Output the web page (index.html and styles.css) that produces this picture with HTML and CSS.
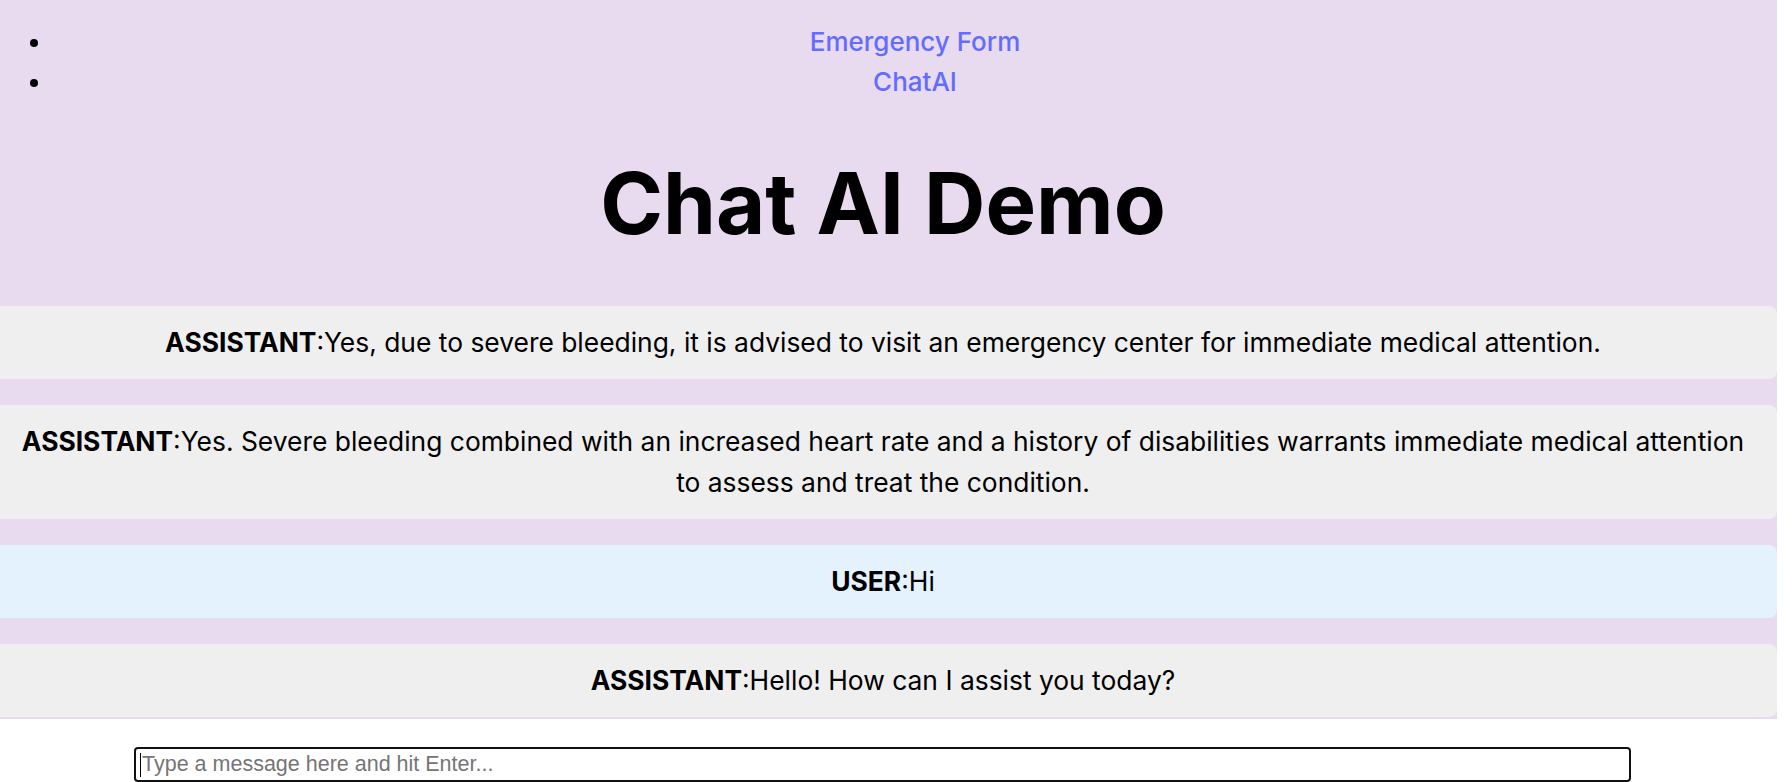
FILE: index.html
```html
<!DOCTYPE html>
<html lang="en">
<head>
<meta charset="utf-8">
<title>Chat AI Demo</title>
<link rel="stylesheet" href="styles.css">
</head>
<body>
<div class="page">
  <div class="app">
    <nav class="nav">
      <ul class="nav-list">
        <li class="nav-item"><a class="nav-link" href="#">Emergency Form</a></li>
        <li class="nav-item"><a class="nav-link" href="#">ChatAI</a></li>
      </ul>
    </nav>
    <main class="content">
      <h1 class="title">Chat AI Demo</h1>
      <div class="messages">
        <div class="msg msg-assistant"><strong>ASSISTANT</strong>:Yes, due to severe bleeding, it is advised to visit an emergency center for immediate medical attention.</div>
        <div class="msg msg-assistant"><strong>ASSISTANT</strong>:Yes. Severe bleeding combined with an increased heart rate and a history of disabilities warrants immediate medical attention to assess and treat the condition.</div>
        <div class="msg msg-user"><strong>USER</strong>:Hi</div>
        <div class="msg msg-assistant"><strong>ASSISTANT</strong>:Hello! How can I assist you today?</div>
      </div>
    </main>
  </div>
  <div class="composer">
    <div class="composer-field">
      <input class="composer-input" type="text" placeholder="Type a message here and hit Enter...">
      <span class="composer-caret"></span>
    </div>
  </div>
</div>
</body>
</html>
```

FILE: styles.css
```css
html, body {
  margin: 0;
  padding: 0;
  background: #ffffff;
}

body {
  font-family: Inter, "Noto Sans", sans-serif;
  color: #000;
  overflow: hidden;
}

.page {
  width: 1792px;
  height: 782px;
  overflow: hidden;
}

.app {
  width: 1777px;
  height: 719px;
  background: #e8daef;
  overflow: hidden;
  display: flex;
  flex-direction: column;
}

.nav-list {
  margin: 22px 0 0;
  padding: 0 0 0 53px;
  list-style: disc;
  font-size: 26px;
  line-height: 40px;
}

.nav-item {
  text-align: center;
}

.nav-link {
  color: #646cff;
  font-weight: 500;
  text-decoration: none;
}

.content {
  margin-left: -11px;
  display: flex;
  flex-direction: column;
}

.title {
  margin: 56px 0 56px;
  font-size: 85px;
  line-height: 92px;
  font-weight: 700;
  text-align: center;
}

.messages {
  display: flex;
  flex-direction: column;
  gap: 26px;
}

.msg {
  padding: 16px 24px;
  font-size: 26.4px;
  line-height: 41px;
  text-align: center;
  border-radius: 8px;
}

.msg strong {
  font-weight: 700;
}

.msg-assistant {
  background: #efefef;
}

.msg-user {
  background: #e3f2fd;
}

.composer {
  display: flex;
  padding: 28px 0 0 134px;
}

.composer-field {
  position: relative;
  width: 1497px;
  height: 35px;
}

.composer-input {
  box-sizing: border-box;
  display: block;
  width: 100%;
  height: 35px;
  border: 2px solid #111;
  border-radius: 4px;
  padding: 0 6px;
  font-family: "Liberation Sans", Arial, sans-serif;
  font-size: 21.5px;
  color: #000;
  background: #fff;
  outline: none;
}

.composer-input::placeholder {
  color: #757575;
}

.composer-caret {
  position: absolute;
  left: 6px;
  top: 6px;
  width: 1px;
  height: 24px;
  background: #000;
}
```
